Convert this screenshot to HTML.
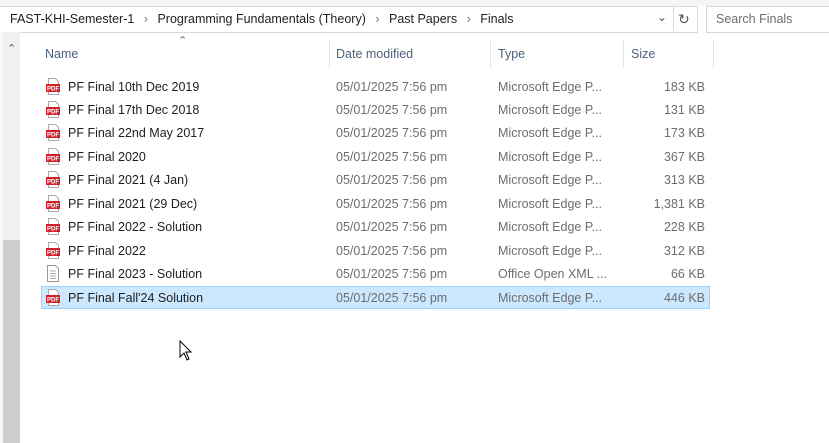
<!DOCTYPE html><html><head><style>
body{margin:0;width:829px;height:443px;background:#fff;font-family:"Liberation Sans",sans-serif;font-size:12.5px;color:#1e1e1e;position:relative;overflow:hidden}
.a{position:absolute}
.row{position:absolute;left:41px;width:669px;height:23px}
.row span{position:absolute;top:5px;white-space:nowrap}
.ic{position:absolute;left:5px;top:3px;width:14px;height:17px}
.hd{color:#4c607a;position:absolute;top:47px}
.dv{position:absolute;top:40px;width:1px;height:28px;background:#e5e5e5}
.g{color:#6d6d6d}
</style></head><body>
<div class="a" style="left:0;top:0;width:829px;height:6px;background:#f5f5f5"></div>
<div class="a" style="left:0;top:6px;width:697px;height:25px;border:1px solid #d9d9d9;border-left:none;background:#fff"></div>
<div class="a" style="left:10px;top:12px;white-space:nowrap">FAST-KHI-Semester-1 <span style="color:#777;margin:0 6px">›</span> Programming Fundamentals (Theory) <span style="color:#777;margin:0 6px">›</span> Past Papers <span style="color:#777;margin:0 6px">›</span> Finals</div>
<div class="a" style="left:657px;top:10px;color:#555;font-size:12px">⌄</div>
<div class="a" style="left:673px;top:6px;width:1px;height:25px;background:#d9d9d9"></div>
<div class="a" style="left:678px;top:11px;color:#555;font-size:14px">↻</div>
<div class="a" style="left:706px;top:6px;width:130px;height:25px;border:1px solid #d9d9d9;background:#fff"></div>
<div class="a" style="left:716px;top:12px;color:#6d6d6d">Search Finals</div>
<div class="a" style="left:0;top:32px;width:3px;height:411px;background:#f7f7f7"></div>
<div class="a" style="left:3px;top:32px;width:17px;height:411px;background:#f0f0f0"></div>
<div class="a" style="left:3px;top:240px;width:17px;height:203px;background:#cdcdcd"></div>
<div class="a" style="left:7px;top:42px;color:#555;font-size:11px">⌃</div>
<div class="a" style="left:178px;top:34px;color:#666;font-size:11px">⌃</div>
<div class="hd" style="left:45px">Name</div>
<div class="hd" style="left:336px">Date modified</div>
<div class="hd" style="left:498px">Type</div>
<div class="hd" style="left:631px">Size</div>
<div class="dv" style="left:329px"></div><div class="dv" style="left:490px"></div><div class="dv" style="left:623px"></div><div class="dv" style="left:713px"></div>
<div class="row" style="top:286px;background:#cce8ff;border:1px solid #99d1ff;box-sizing:border-box"></div>
<div id="rows"></div>
<svg class="a" style="left:179px;top:340px" width="14" height="22"><path d="M1 1 L1 17 L5 13 L8 20 L10 19 L7 12 L12 12 Z" fill="#fff" stroke="#000" stroke-width="1"/></svg>
<script>
var d=[["PF Final 10th Dec 2019","183 KB"],["PF Final 17th Dec 2018","131 KB"],["PF Final 22nd May 2017","173 KB"],["PF Final 2020","367 KB"],["PF Final 2021 (4 Jan)","313 KB"],["PF Final 2021 (29 Dec)","1,381 KB"],["PF Final 2022 - Solution","228 KB"],["PF Final 2022","312 KB"],["PF Final 2023 - Solution","66 KB",1],["PF Final Fall'24 Solution","446 KB"]];
var h="";d.forEach(function(r,i){var t=74.5+i*23.45;
var ic=r[2]?'<svg class="ic" viewBox="0 0 14 17"><path d="M1.5 .5h8l3 3v13h-11z" fill="#fff" stroke="#999"/><path d="M4 6h6M4 8.5h6M4 11h6M4 13.5h6" stroke="#aaa"/></svg>':'<svg class="ic" viewBox="0 0 14 17"><path d="M2.5 .5h7l3 3v13h-10z" fill="#fff" stroke="#aaa"/><rect x="0" y="6" width="14" height="8" fill="#d0202a"/><text x="7" y="12.5" font-size="6" font-family="Liberation Sans" font-weight="bold" fill="#fff" text-anchor="middle">PDF</text></svg>';
h+='<div class="row" style="top:'+t+'px">'+ic+'<span style="left:27px">'+r[0]+'</span><span class="g" style="left:295px">05/01/2025 7:56 pm</span><span class="g" style="left:457px">'+(r[2]?'Office Open XML ...':'Microsoft Edge P...')+'</span><span class="g" style="right:5px">'+r[1]+'</span></div>'});
document.getElementById("rows").innerHTML=h;
</script>
</body></html>
